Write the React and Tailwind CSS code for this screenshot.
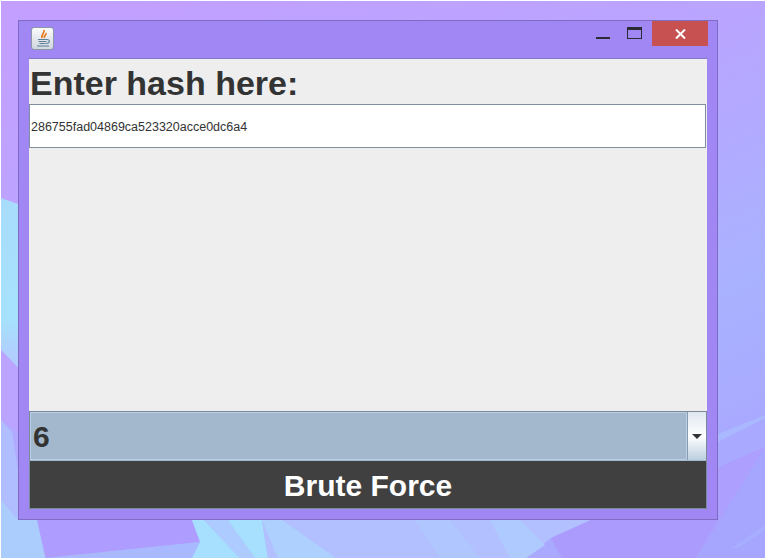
import React from 'react';

function Wallpaper() {
  return (
    <svg className="absolute inset-0" width="766" height="559" viewBox="0 0 766 559">
      <defs>
        <linearGradient id="wall" x1="0" y1="0" x2="0.6" y2="1">
          <stop offset="0" stopColor="#c49fff" />
          <stop offset="0.45" stopColor="#b9a5ff" />
          <stop offset="0.8" stopColor="#a9b2ff" />
          <stop offset="1" stopColor="#a9a9ff" />
        </linearGradient>
        <linearGradient id="cyan" x1="0" y1="0" x2="0" y2="1">
          <stop offset="0" stopColor="#a8dcfc" />
          <stop offset="0.7" stopColor="#a6e2fd" />
          <stop offset="1" stopColor="#b4c8ff" />
        </linearGradient>
      </defs>
      <rect x="1" y="1" width="764" height="557" fill="url(#wall)" />
      {/* left strip */}
      <polygon points="1,198 18,204 18,368 1,350" fill="url(#cyan)" />
      <polygon points="1,350 18,368 18,432 1,420" fill="#bba4ff" />
      <polygon points="1,420 12,432 18,470 18,520 37,520 45,558 1,558" fill="#b0bdff" />
      <polygon points="1,500 18,520 37,520 45,558 1,558" fill="#abcdfe" />
      {/* bottom strip */}
      <polygon points="37,520 192,520 200,542 46,558" fill="#ae9cfe" />
      <polygon points="46,558 200,542 192,558" fill="#a9b9ff" />
      <polygon points="192,520 204,520 240,558 192,558 200,542" fill="#a7dffe" />
      <polygon points="204,520 228,520 268,558 240,558" fill="#aecbff" />
      <polygon points="228,520 262,520 268,558 255,558" fill="#a6e0fe" />
      <polygon points="262,520 591,520 551,538 526,558 268,558" fill="#b2c0ff" />
      <polygon points="262,520 282,520 336,558 278,558" fill="#aed0ff" />
      <polygon points="415,520 450,520 480,558 440,558" fill="#b0c6ff" />
      <polygon points="490,520 520,520 545,545 526,558 510,558" fill="#afcaff" />
      <polygon points="591,520 718,520 696,558 562,558 551,538" fill="#aa9bfd" />
      {/* right strip */}
      <polygon points="718,434 765,415 765,418 718,442" fill="#a9b8ff" />
      <polygon points="718,467 765,447 697,558 718,520" fill="#ac9ffe" />
      <polygon points="765,447 765,558 697,558" fill="#a6a6ff" />
      <polygon points="732,548 765,525 765,530 738,548" fill="#a8aeff" />
    </svg>
  );
}

function JavaIcon() {
  return (
    <div className="flex h-[23px] w-[23px] items-center justify-center rounded-[3px] border border-[#8b98a8] bg-gradient-to-b from-[#fbfbfb] to-[#d0d7df]">
      <svg width="18" height="19" viewBox="0 0 18 19" fill="none">
        <path d="M10 1C11 4 7 5 8 9M12 4C13 6 9 7 10.500 9" stroke="#e8791a" strokeWidth="1.700" />
        <path d="M4 10.500h9M4.500 12.500h8M5.500 14.500h6" stroke="#5b7f97" strokeWidth="1.100" />
        <path d="M13 10.500c3.500 0 3 3.500-1 4M3 17h12" stroke="#5b7f97" strokeWidth="1.100" />
      </svg>
    </div>
  );
}

function WindowControls() {
  return (
    <div className="flex items-start">
      <div className="mt-[16px] h-[2px] w-[14px] bg-[#2b2b33]" />
      <div className="ml-[17px] mt-[6px] h-[12px] w-[15px] border border-t-[3px] border-[#2b2b33]" />
      <div className="ml-[10px] flex h-[25px] w-[56px] items-center justify-center bg-[#c75050]">
        <svg width="11" height="10" viewBox="0 0 11 10">
          <path d="M1 0.500L10 9.500M10 0.500L1 9.500" stroke="#fff" strokeWidth="2" />
        </svg>
      </div>
    </div>
  );
}

export default function App() {
  return (
    <div className="relative h-[559px] w-[766px] overflow-hidden bg-white font-['Liberation_Sans',Arial,sans-serif]">
      <Wallpaper />
      <div className="absolute left-[18px] top-[20px] flex h-[500px] w-[700px] flex-col border border-[#7d6bc4] bg-[#a087f4]">
        <div className="flex h-[38px] shrink-0 justify-between pl-[12px] pr-[9px]">
          <div className="pt-[6px]">
            <JavaIcon />
          </div>
          <WindowControls />
        </div>
        <div className="mx-[10px] mb-[10px] flex min-h-0 flex-1 flex-col bg-[#eeeeee] shadow-[0_-1px_0_#7d78c8]">
          <div className="h-[45px] shrink-0 pl-px text-[34px] font-bold leading-[48px] text-[#333333]">
            Enter hash here:
          </div>
          <div className="mr-px flex h-[44px] shrink-0 items-center border border-[#7f8fa0] bg-white pl-px pt-[2px] text-[12.5px] text-[#333333]">
            286755fad04869ca523320acce0dc6a4
          </div>
          <div className="flex-1" />
          <div className="flex h-[98px] shrink-0 flex-col border-x border-b-2 border-[#7a8a9b]">
            <div className="flex h-[49px] shrink-0 border-t border-[#7a8a9b]">
              <div className="flex flex-1 items-center border border-[#b8cfe5] bg-[#a3b8cc] pl-[2px] text-[30px] font-bold text-[#333333]">
                6
              </div>
              <div className="flex w-[19px] items-center justify-center border-l border-[#8a9aab] bg-gradient-to-b from-[#dfe7ef] via-white to-[#bccfe0]">
                <svg width="10" height="5" viewBox="0 0 10 5">
                  <path d="M0 0h10L5 5z" fill="#333333" />
                </svg>
              </div>
            </div>
            <div className="flex flex-1 items-center justify-center border-t border-[#a3b8cc] bg-[#404040] pt-[2px] text-[30px] font-bold text-white">
              Brute Force
            </div>
          </div>
        </div>
      </div>
    </div>
  );
}
